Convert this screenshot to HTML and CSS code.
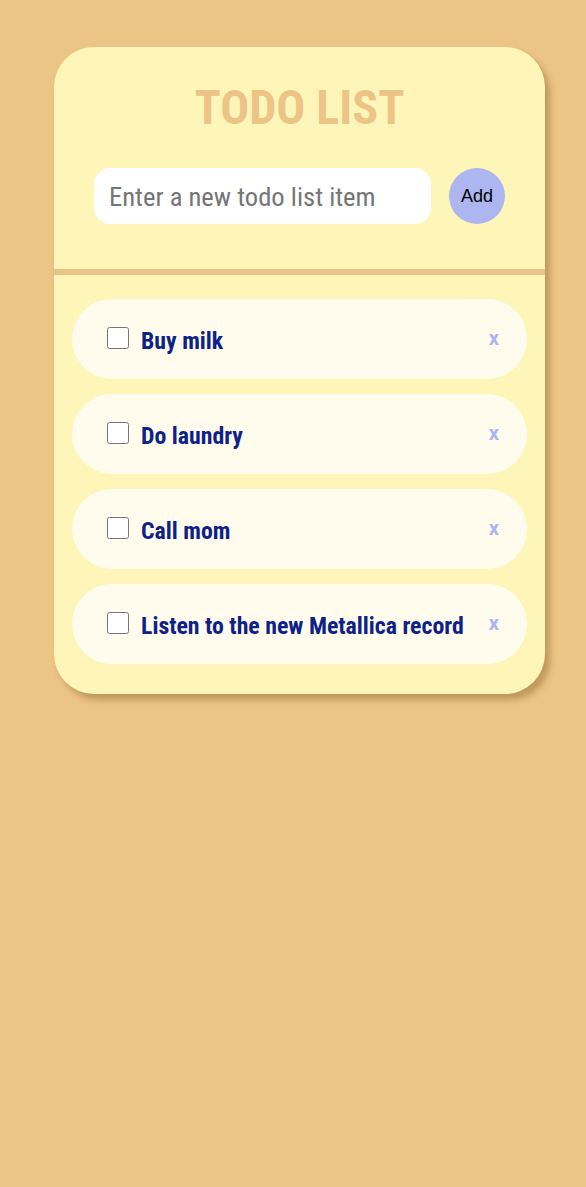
FILE: index.html
```html
<!DOCTYPE html>
<html>
<head>
<meta charset="utf-8">
<link rel="stylesheet" href="styles.css">
</head>
<body>
<main class="card">
  <header class="head">
    <h1 class="title">TODO LIST</h1>
    <form class="add-form">
      <input class="new-item" type="text" placeholder="Enter a new todo list item">
      <button class="add-btn" type="button">Add</button>
    </form>
  </header>
  <ul class="list">
    <li class="item"><input class="check" type="checkbox"><span class="label">Buy milk</span><button class="del" type="button">x</button></li>
    <li class="item"><input class="check" type="checkbox"><span class="label">Do laundry</span><button class="del" type="button">x</button></li>
    <li class="item"><input class="check" type="checkbox"><span class="label">Call mom</span><button class="del" type="button">x</button></li>
    <li class="item"><input class="check" type="checkbox"><span class="label">Listen to the new Metallica record</span><button class="del" type="button">x</button></li>
  </ul>
</main>
</body>
</html>
```
FILE: styles.css
```css
html, body {
  margin: 0;
  padding: 0;
}
body {
  background: #ebc486;
  min-height: 1187px;
  padding-top: 47px;
  box-sizing: border-box;
  font-family: Roboto, "Liberation Sans", sans-serif;
  font-stretch: 75%;
}
.card {
  width: 491px;
  margin-left: 54px;
  background: #fef5b8;
  border-radius: 40px;
  box-shadow: 5px 6px 6px rgba(140, 100, 40, 0.45);
  overflow: hidden;
}
.head {
  border-bottom: 6px solid #ebc486;
  padding: 31px 0 45px;
}
.title {
  margin: 0;
  text-align: center;
  font-size: 48px;
  line-height: 60px;
  font-weight: 700;
  color: #ebc486;
  font-stretch: 75%;
}
.add-form {
  display: flex;
  align-items: center;
  gap: 18px;
  margin: 30px 0 0 40px;
}
.new-item {
  width: 337px;
  height: 56px;
  box-sizing: border-box;
  border: none;
  border-radius: 16px;
  background: #fff;
  padding: 0 15px;
  font-family: Roboto, sans-serif;
  font-stretch: 75%;
  font-size: 26.6px;
  outline: none;
}
.new-item::placeholder {
  color: #757575;
}
.add-btn {
  width: 56px;
  height: 56px;
  border-radius: 50%;
  border: none;
  background: #adb6f0;
  color: #000;
  font-family: "Liberation Sans", Arial, sans-serif;
  font-size: 18px;
  padding: 0;
}
.list {
  list-style: none;
  margin: 0;
  padding: 24px 18px 30px;
  display: flex;
  flex-direction: column;
  gap: 15px;
}
.item {
  height: 80px;
  border-radius: 40px;
  background: #fffcee;
  display: flex;
  align-items: center;
  padding: 0 28px 0 35px;
  box-sizing: border-box;
}
.check {
  width: 22px;
  height: 22px;
  margin: -2px 12px 0 0;
  flex: none;
}
.label {
  flex: 1;
  font-size: 23.8px;
  font-weight: 700;
  color: #0d2189;
  font-stretch: 75%;
  padding-top: 4px;
}
.del {
  border: none;
  background: none;
  padding: 0;
  color: #abb5f1;
  font-family: Roboto, sans-serif;
  font-weight: 700;
  font-size: 20px;
  margin-top: -2px;
}
```
